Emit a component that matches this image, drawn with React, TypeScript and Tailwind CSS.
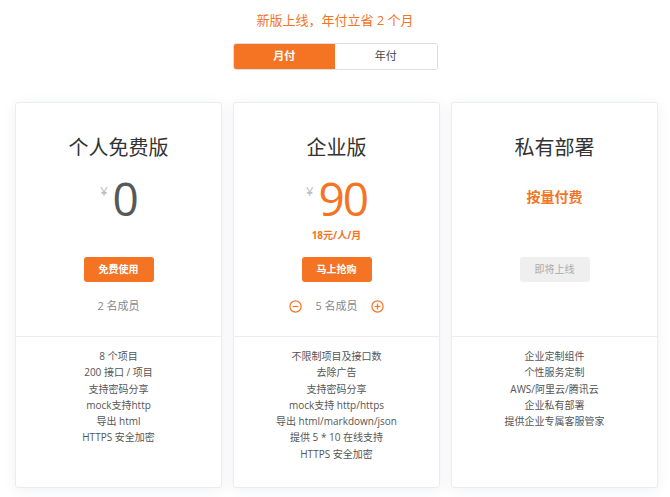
import type { ReactNode } from "react";

const font = { fontFamily: '"Open Sans", "Noto Sans CJK SC", sans-serif' };

const plans = [
  {
    name: "个人免费版",
    features: ["8 个项目", "200 接口 / 项目", "支持密码分享", "mock支持http", "导出 html", "HTTPS 安全加密"],
  },
  {
    name: "企业版",
    features: [
      "不限制项目及接口数",
      "去除广告",
      "支持密码分享",
      "mock支持 http/https",
      "导出 html/markdown/json",
      "提供 5 * 10 在线支持",
      "HTTPS 安全加密",
    ],
  },
  {
    name: "私有部署",
    features: ["企业定制组件", "个性服务定制", "AWS/阿里云/腾讯云", "企业私有部署", "提供企业专属客服管家"],
  },
];

function CircleIcon({ plus }: { plus?: boolean }) {
  return (
    <svg width="13" height="13" viewBox="0 0 13 13" fill="none" stroke="#f47424" strokeWidth="1.2">
      <circle cx="6.5" cy="6.5" r="5.6" />
      <path d="M3.6 6.5h5.8" />
      {plus && <path d="M6.5 3.6v5.8" />}
    </svg>
  );
}

function Price({ value, orange }: { value: string; orange?: boolean }) {
  return (
    <div className="mt-[16px] flex items-start">
      <span className="mr-[5px] mt-[5px] text-[13px] leading-[16px] text-[#bdbdbd]">¥</span>
      <span
        className={`text-[46px] leading-[40px] tracking-[-2px] ${orange ? "text-[#f47424]" : "text-[#585858]"}`}
      >
        {value}
      </span>
    </div>
  );
}

function Card({ name, features, children }: { name: string; features: string[]; children: ReactNode }) {
  return (
    <div className="flex h-[386px] w-[207px] flex-col rounded-[3px] border border-[#ebebf3] bg-white shadow-[0_2px_14px_rgba(40,50,100,0.07)]">
      <div className="flex h-[234px] flex-col items-center border-b border-[#ebebf5] pt-[31px]">
        <h2 className="text-[20px] leading-[28px] text-[#333]">{name}</h2>
        {children}
      </div>
      <ul className="flex flex-col items-center pt-[11px] text-[10px] leading-[16.3px] text-[#555]">
        {features.map((f) => (
          <li key={f}>{f}</li>
        ))}
      </ul>
    </div>
  );
}

export default function App() {
  return (
    <div className="min-h-[497px] w-[670px] bg-white" style={font}>
      <p className="pt-[11px] text-center text-[13px] leading-[18px] text-[#f47424]">新版上线，年付立省 2 个月</p>

      <div className="mx-auto mt-[14px] flex h-[27px] w-[205px] overflow-hidden rounded-[3px] border border-[#dedede] text-[11px]">
        <button className="flex-1 bg-[#f47424] font-bold text-white">月付</button>
        <button className="flex-1 bg-white text-[#444]">年付</button>
      </div>

      <div className="mt-[32px] flex gap-[11px] pl-[15px]">
        <Card name={plans[0].name} features={plans[0].features}>
          <div className="flex h-[95px] flex-col items-center">
            <Price value="0" />
          </div>
          <button className="h-[25px] w-[70px] rounded-[3px] bg-[#f47424] text-[10px] font-bold text-white">免费使用</button>
          <p className="mt-[16px] text-[11px] leading-[16px] text-[#888]">2 名成员</p>
        </Card>

        <Card name={plans[1].name} features={plans[1].features}>
          <div className="flex h-[95px] flex-col items-center">
            <Price value="90" orange />
            <p className="mt-[10px] text-[10px] font-bold leading-[14px] text-[#f47424]">18元/人/月</p>
          </div>
          <button className="h-[25px] w-[70px] rounded-[3px] bg-[#f47424] text-[10px] font-bold text-white">马上抢购</button>
          <div className="mt-[16px] flex items-center gap-[13px] text-[11px] leading-[16px] text-[#888]">
            <CircleIcon />
            <span>5 名成员</span>
            <CircleIcon plus />
          </div>
        </Card>

        <Card name={plans[2].name} features={plans[2].features}>
          <div className="flex h-[95px] flex-col items-center">
            <p className="mt-[25px] text-[14px] font-bold leading-[20px] text-[#f47424]">按量付费</p>
          </div>
          <button className="h-[25px] w-[70px] rounded-[3px] bg-[#efefef] text-[10px] text-[#aaa]">即将上线</button>
        </Card>
      </div>
    </div>
  );
}
